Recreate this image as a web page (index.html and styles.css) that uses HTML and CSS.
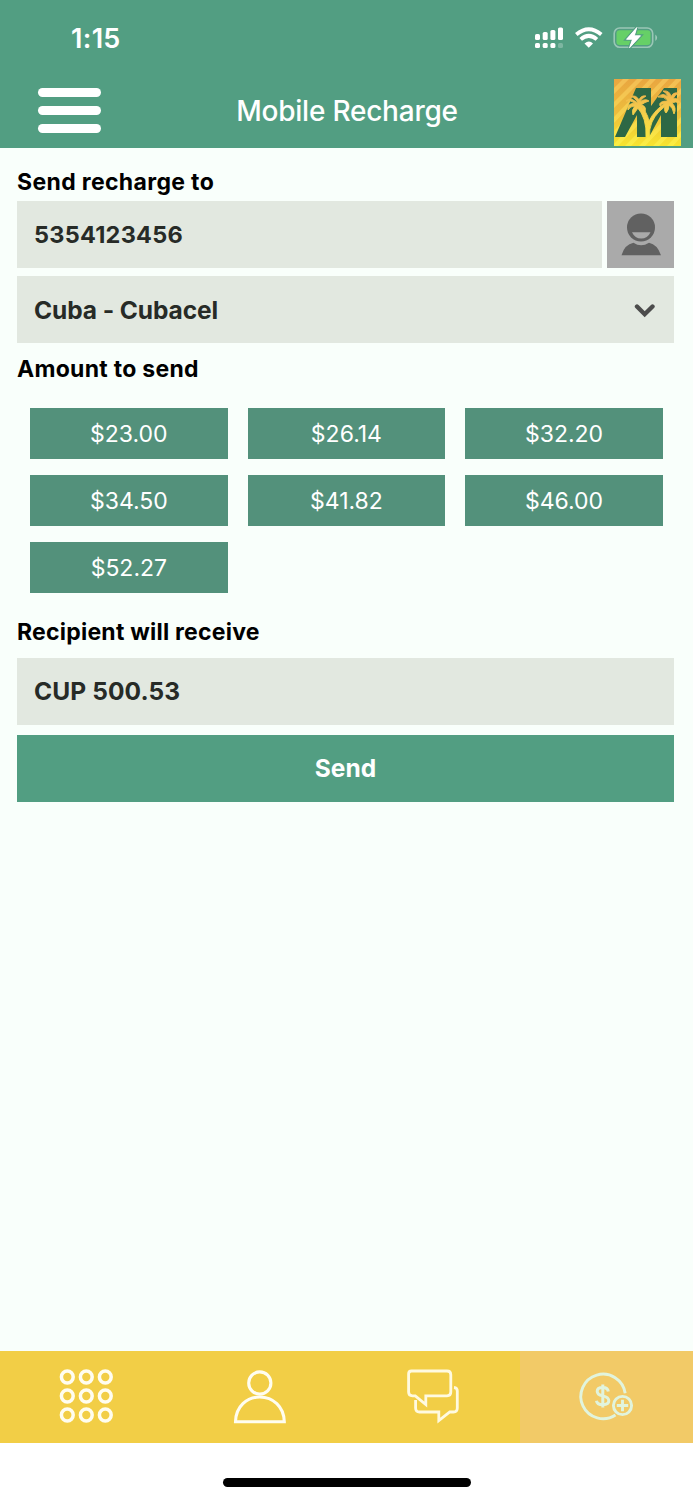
FILE: index.html
```html
<!DOCTYPE html>
<html lang="en">
<head>
<meta charset="utf-8">
<title>Mobile Recharge</title>
<link rel="stylesheet" href="styles.css">
</head>
<body>
<div class="app">
  <div class="status">
    <span class="time">1:15</span>
    <svg class="status-icons" width="124" height="24" viewBox="0 0 124 24">
      <g fill="#fff">
        <rect x="1" y="8" width="5" height="6" rx="1.6"/><rect x="8.700" y="6" width="5" height="8" rx="1.600"/><rect x="16.400" y="4" width="5" height="10" rx="1.600"/><rect x="24" y="1.500" width="5" height="12.500" rx="1.600"/>
        <rect x="1" y="17" width="5" height="5" rx="1.600"/><rect x="8.700" y="17" width="5" height="5" rx="1.600"/><rect x="16.400" y="17" width="5" height="5" rx="1.600"/><rect x="24" y="17" width="5" height="5" rx="1.600" opacity=".25"/>
        <path d="M50.500 17.500Q55 13.700 59 17.500L54.750 21.800Z"/>
      </g>
      <g fill="none" stroke="#fff" stroke-width="3.900"><path d="M42.300 8.400Q54.750-2 67.300 8.400"/><path d="M46.700 13.400Q54.750 6.300 62.900 13.400"/></g>
      <rect x="80.200" y="2" width="38.500" height="19.300" rx="5.500" fill="none" stroke="#fff" stroke-opacity=".42" stroke-width="1.600"/>
      <path d="M121.300 8.500Q125 11.600 121.300 15Z" fill="#fff" opacity=".45"/>
      <rect x="82.500" y="4.300" width="34" height="14.700" rx="3.200" fill="#66d067"/>
      <path d="M102.800 1.500L92.500 13.300H98.500L95.500 21.800L106.500 9.800H100.300Z" fill="#fff" stroke="#529e82" stroke-width="3" paint-order="stroke"/>
      <path d="M102.800 1.500L92.500 13.300H98.500L95.500 21.800L106.500 9.800H100.300Z" fill="#fff" stroke="#fff" stroke-width=".8" stroke-linejoin="round"/>
    </svg>
  </div>
  <header class="header">
    <button class="menu" aria-label="Menu"><span></span><span></span><span></span></button>
    <h1 class="title">Mobile Recharge</h1>
    <svg class="logo" width="67" height="67" viewBox="0 0 67 67">
      <defs>
        <linearGradient id="sky" x2="0" y2="1"><stop offset="0" stop-color="#e9a640"/><stop offset=".5" stop-color="#edbd3d"/><stop offset="1" stop-color="#f7e52f"/></linearGradient>
        <linearGradient id="ray" x2="0" y2="1"><stop offset="0" stop-color="#f3bd54"/><stop offset=".5" stop-color="#f6d04e"/><stop offset="1" stop-color="#fbef42"/></linearGradient>
        <linearGradient id="palm" gradientUnits="userSpaceOnUse" x1="0" y1="10" x2="0" y2="60"><stop offset="0" stop-color="#eeb04a"/><stop offset=".4" stop-color="#f5cb4c"/><stop offset="1" stop-color="#f9e53d"/></linearGradient>
      </defs>
      <rect width="67" height="67" fill="url(#sky)"/>
      <path fill="url(#ray)" d="M0 9L9 0H15L0 15ZM0 23L23 0H29L0 29ZM0 38L36 0H42L0 44ZM0 52L49 0H55L0 58ZM0 65L62 0H67V1L4 67H0ZM11 67L67 9V15L17 67ZM25 67L67 23V29L31 67ZM39 67L67 38V44L45 67ZM53 67L67 52V58L59 67Z"/>
      <path fill="#2d6845" d="M22 9H37V27L50 9H63V58H47V36L35 58H23V36L11 58H1Z"/>
      <g fill="url(#palm)" stroke="url(#palm)" stroke-width=".9" stroke-linejoin="round">
        <path d="M25 26Q33 32 35 42Q41 30 53 23L55 25Q43 32 38 43Q35 50 35.500 58H32Q33 39 23 28Z"/>
        <path d="M24 25Q22 19 17 17.500Q22 15.500 25 21Q27 16 32 17Q28 19 26 23Q31 19 35 22Q31 23 27 26Q33 27 31 33Q29 28 25 27Q23 31 19 36Q17 31 21 27Q16 27 14 31Q12 25 21 24Q16 21 12 22Q17 17 24 25Z"/>
        <path d="M54 22Q50 17 44 18Q49 13 54 18Q53 14 49 12Q56 11 57 18Q59 13 64 14Q60 17 59 20Q64 18 66 24Q61 22 58 24Q63 29 60 35Q59 29 55 26Q55 31 52 34Q49 31 52 25Q48 24 46 27Q44 22 54 22Z"/>
      </g>
    </svg>
  </header>

  <main class="content">
    <h2 class="label label-to">Send recharge to</h2>
    <div class="phone-row">
      <div class="field"><span class="number">5354123456</span></div>
      <button class="contact" aria-label="Choose contact">
        <svg width="67" height="67" viewBox="0 0 67 67">
          <circle cx="34" cy="26.500" r="14" fill="#616161"/>
          <path d="M25 31.200H43.500Q40.500 37.500 34.200 37.500T25 31.200Z" fill="#aaa"/>
          <path d="M14.500 54.200Q17.500 43.500 26.500 41.700Q34 47 42 41.700Q50.500 43.500 54 54.200Z" fill="#616161"/>
        </svg>
      </button>
    </div>
    <div class="field select"><span class="country">Cuba - Cubacel</span>
      <svg width="22" height="16" viewBox="0 0 22 16"><path d="M3 4.500L10.700 12.200L18.500 4.500" fill="none" stroke="#4c4c4c" stroke-width="4.400" stroke-linecap="round"/></svg>
    </div>
    <h2 class="label label-amount">Amount to send</h2>
    <div class="amounts">
      <button>$23.00</button><button>$26.14</button><button>$32.20</button>
      <button>$34.50</button><button>$41.82</button><button>$46.00</button>
      <button>$52.27</button>
    </div>
    <h2 class="label label-receive">Recipient will receive</h2>
    <div class="field"><span class="cup">CUP 500.53</span></div>
    <button class="send">Send</button>
  </main>

  <nav class="tabs">
    <a class="tab"><svg width="60" height="60" viewBox="0 0 60 60"><g fill="none" stroke="#fffdf0" stroke-width="3.500">
      <circle cx="11.300" cy="11" r="5.900"/><circle cx="30.300" cy="11" r="5.900"/><circle cx="49.300" cy="11" r="5.900"/>
      <circle cx="11.300" cy="30" r="5.900"/><circle cx="30.300" cy="30" r="5.900"/><circle cx="49.300" cy="30" r="5.900"/>
      <circle cx="11.300" cy="49" r="5.900"/><circle cx="30.300" cy="49" r="5.900"/><circle cx="49.300" cy="49" r="5.900"/></g></svg></a>
    <a class="tab"><svg width="60" height="60" viewBox="0 0 60 60"><g fill="none" stroke="#fffdf0" stroke-width="3.100"><circle cx="30.800" cy="17" r="11.100"/><path d="M6.500 55.800C6.800 40.500 17.800 31 30.800 31S55 40.500 55.300 55.800Z"/></g></svg></a>
    <a class="tab"><svg width="60" height="60" viewBox="0 0 60 60"><g fill="none" stroke="#fffae0" stroke-width="2.800"><path d="M8.500 5H44Q47.800 5 47.800 8.800V26Q47.800 29.800 44 29.800H22.800V38.500L12.300 29.800H9.500Q5.600 29.800 5.600 26V8Q5.600 5 8.500 5Z"/><path d="M51 21.500Q54.300 21.800 54.300 25V42Q54.300 46 50.500 46H46.800L35.800 54.600V46H16.500Q12.600 46 12.600 42V34"/></g></svg></a>
    <a class="tab active"><svg width="60" height="60" viewBox="0 0 60 60"><g fill="none" stroke="#e1f4dd" stroke-width="2.900">
      <path d="M49.200 27.300A22.300 22.300 0 1 0 39.500 49"/><circle cx="46.500" cy="39.500" r="9.100"/><path d="M46.500 33.800V45.200M40.800 39.500H52.200"/>
      <path stroke-width="3" d="M32.300 25.500Q31.700 21.500 26.800 21.500Q21.200 21.500 21.200 25.300Q21.200 28.800 26.700 29.900Q32.800 31.200 32.800 34.800Q32.800 38.700 26.800 38.700Q21 38.700 20.500 34.800M26.800 18.500V41.500"/></g></svg></a>
  </nav>
  <div class="home"><span></span></div>
</div>
</body>
</html>
```
FILE: styles.css
```css
* { box-sizing: border-box; }
body { margin: 0; font-family: Inter, "Liberation Sans", sans-serif; }
button { border: 0; border-radius: 0; padding: 0; font-family: inherit; }
svg { display: block; flex: none; }
.app { width: 693px; height: 1500px; display: flex; flex-direction: column; background: #f9fffb; }

.status { height: 76px; background: #529e82; color: #fff; display: flex; justify-content: space-between; align-items: center; padding: 0 35px 0 71px; }
.time { font-size: 27px; font-weight: 600; line-height: 30px; letter-spacing: 0.300px; padding-top: 2px; }
.status-icons { margin-top: -1px; }

.header { height: 72px; background: #529e82; display: grid; grid-template-columns: 101px 1fr 79px; align-items: center; }
.menu { background: none; width: 63px; margin-left: 38px; display: flex; flex-direction: column; gap: 8.500px; margin-top: -3px; }
.menu span { height: 9.400px; border-radius: 5px; background: #fff; }
.title { margin: 0 0 2px -21px; justify-self: center; color: #fff; font-size: 28px; font-weight: 500; line-height: 36px; letter-spacing: -0.220px; white-space: nowrap; }
.logo { margin-top: 1px; }

.content { flex: 1; padding: 19px 19px 0 17px; }
.label { margin: 0; color: #000; font-size: 23px; font-weight: 700; line-height: 30px; letter-spacing: 0.280px; white-space: nowrap; }
.label-to { height: 34px; letter-spacing: 0.350px; }
.phone-row { display: grid; grid-template-columns: 585px 67px; gap: 5px; margin-bottom: 8.400px; }
.field { height: 67px; background: #e2e8e0; color: #272b27; display: flex; align-items: center; justify-content: space-between; padding: 0 18px 0 17px; font-size: 24.500px; font-weight: 700; }
.number { font-size: 23.500px; letter-spacing: 0.250px; }
.country { letter-spacing: -0.080px; }
.cup { letter-spacing: 0.100px; }
.contact { background: #aaa; height: 67px; }
.label-amount { margin-top: 10.600px; height: 54.500px; }
.amounts { padding: 0 11px 0 13px; display: grid; grid-template-columns: repeat(3, 197.700px); column-gap: 19.900px; grid-auto-rows: 50.500px; row-gap: 16.500px; }
.amounts button { background: #53917b; color: #fff; font-size: 23px; }
.label-receive { margin-top: 24px; height: 41px; letter-spacing: 0.230px; }
.send { display: block; width: 100%; height: 67px; margin-top: 10px; background: #529e82; color: #fff; font-size: 24.500px; font-weight: 700; }

.tabs { height: 92px; background: #f2ce46; display: grid; grid-template-columns: repeat(4, 1fr); }
.tab { display: flex; align-items: center; justify-content: center; padding: 0 1px 2px 0; }
.active { background: #f2ca67; padding-right: 0; }
.home { height: 57px; background: #fff; display: flex; justify-content: center; padding-top: 35px; }
.home span { width: 248px; height: 8.500px; border-radius: 5px; background: #000; }
```
